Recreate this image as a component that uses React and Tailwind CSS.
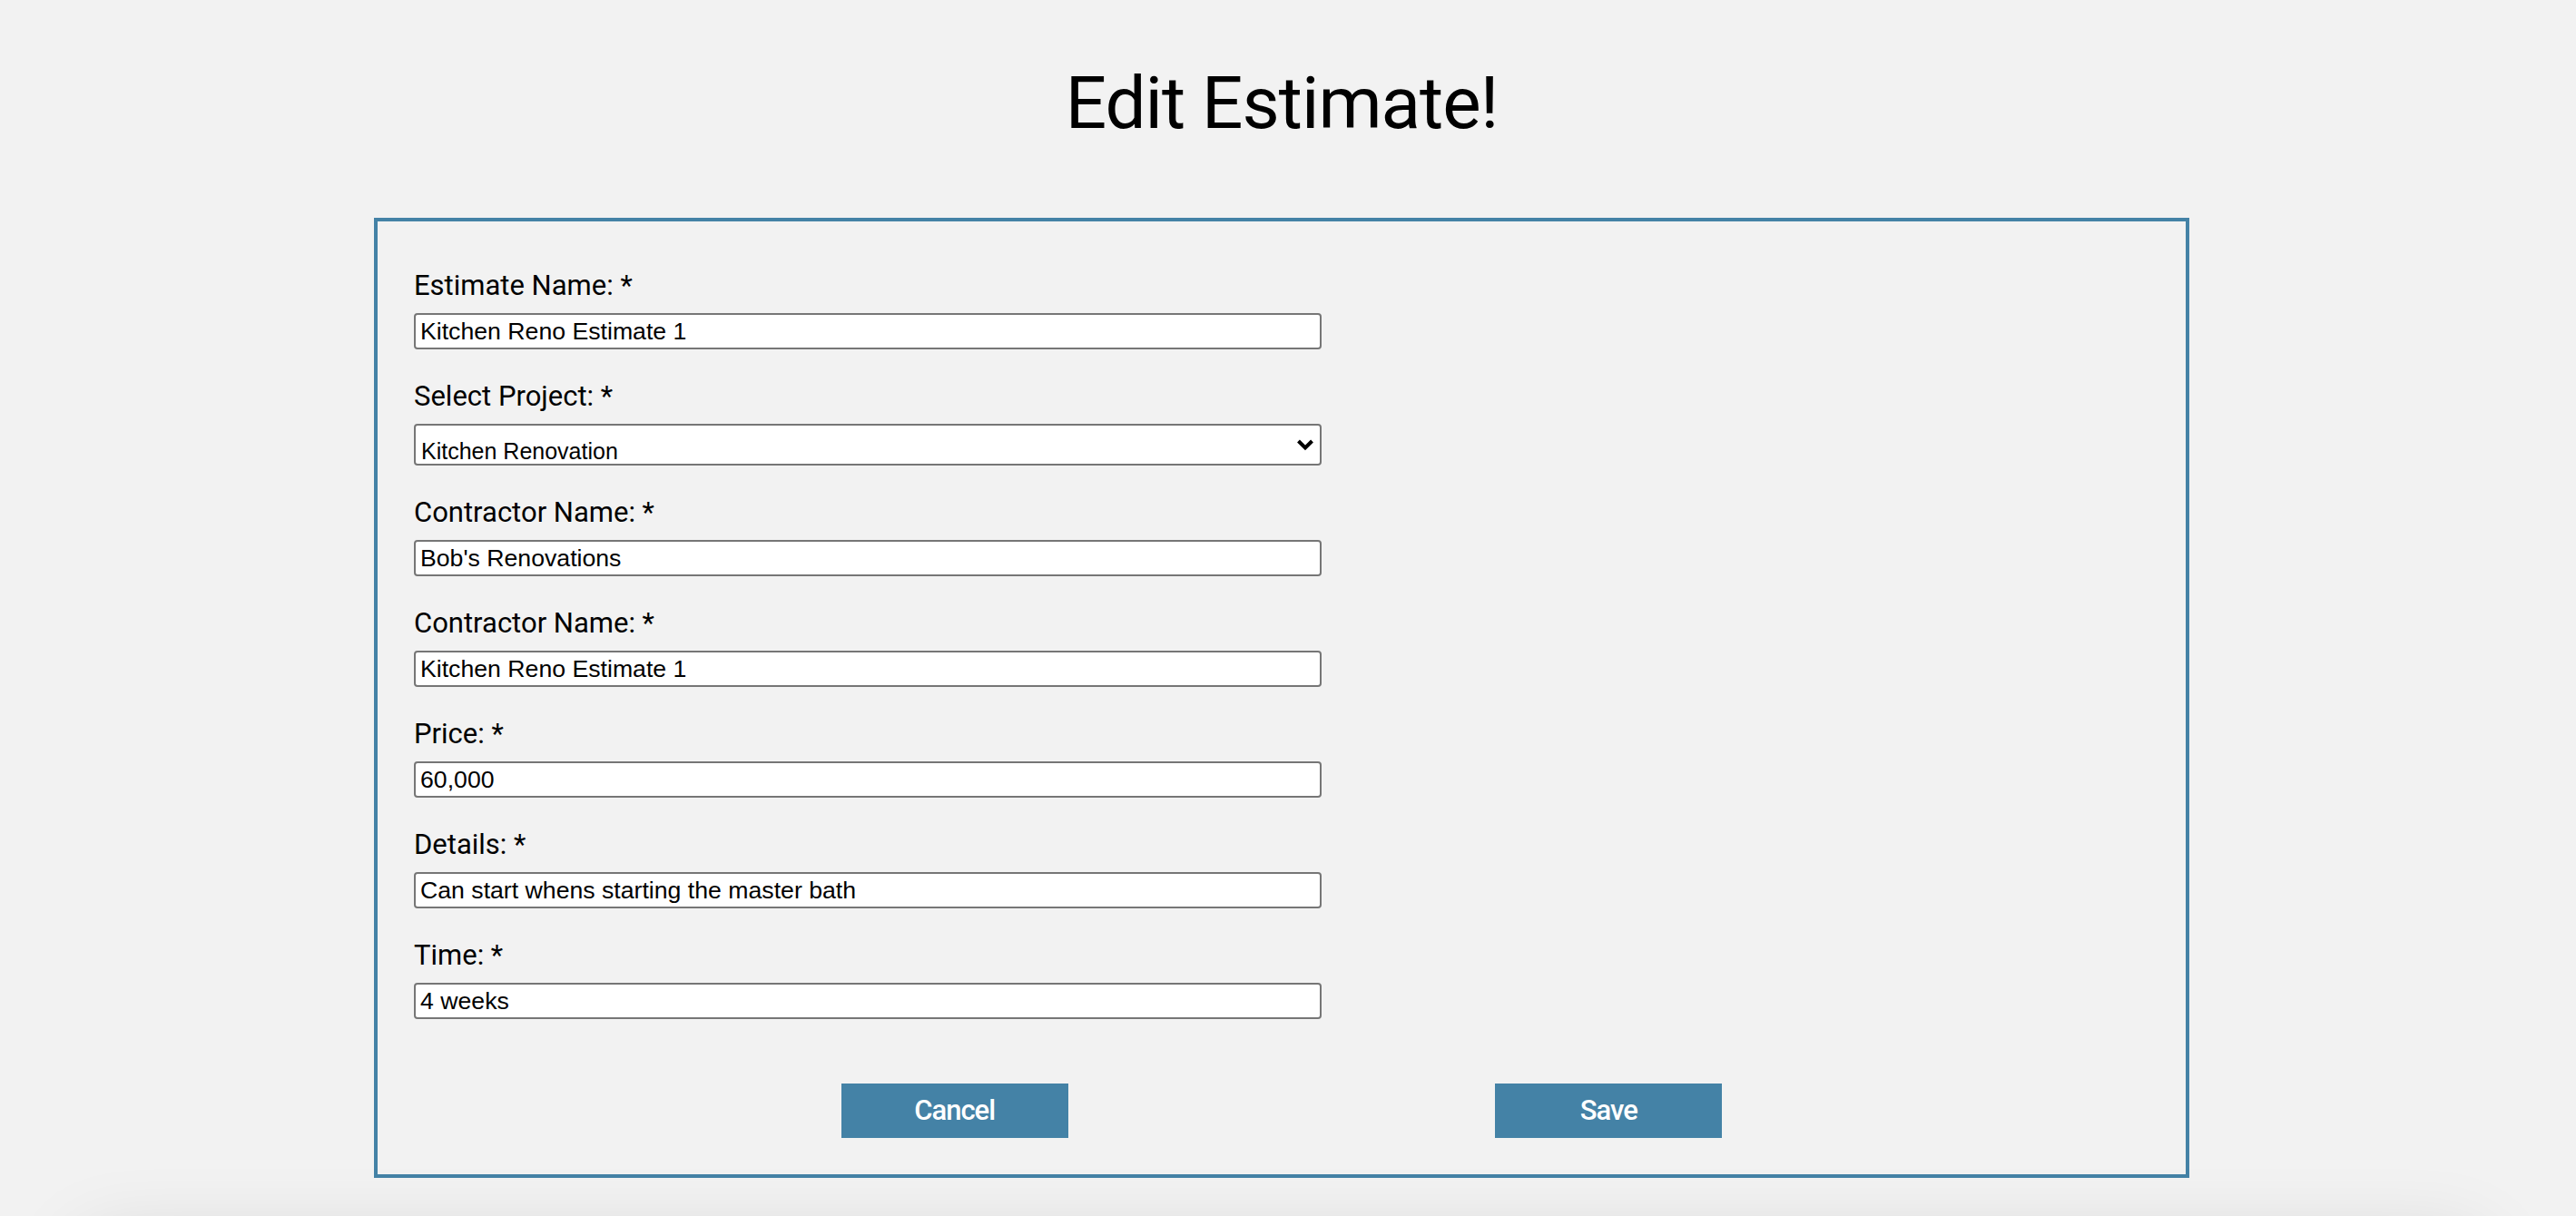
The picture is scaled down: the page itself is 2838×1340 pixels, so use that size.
import React from "react";

const fields = [
  { label: "Estimate Name: *", value: "Kitchen Reno Estimate 1" },
  { label: "Select Project: *", select: true, value: "Kitchen Renovation" },
  { label: "Contractor Name: *", value: "Bob's Renovations" },
  { label: "Contractor Name: *", value: "Kitchen Reno Estimate 1" },
  { label: "Price: *", value: "60,000" },
  { label: "Details: *", value: "Can start whens starting the master bath" },
  { label: "Time: *", value: "4 weeks" },
];

const head = { fontFamily: "Roboto, 'Liberation Sans', sans-serif" };
const body = { fontFamily: "'Liberation Sans', Arial, sans-serif" };

function Field({ f }) {
  return (
    <div className="flex flex-col">
      <label
        className="block text-[31px] leading-[36px] text-black"
        style={head}
      >
        {f.label}
      </label>
      {f.select ? (
        <div className="relative mt-[12px] w-[1000px] h-[46px]">
          <select
            defaultValue={f.value}
            className="appearance-none w-full h-full bg-white border-2 border-[#767676] rounded-[4px] pl-[6px] pt-[10px] text-[25px] text-black outline-none"
            style={body}
          >
            <option>Kitchen Renovation</option>
            <option>Master Bath</option>
          </select>
          <svg
            className="absolute right-[8px] top-[16px] pointer-events-none"
            width="20"
            height="14"
            viewBox="0 0 20 14"
          >
            <polyline
              points="2.5,3 10,10.5 17.5,3"
              fill="none"
              stroke="#000"
              strokeWidth="4"
            />
          </svg>
        </div>
      ) : (
        <input
          type="text"
          defaultValue={f.value}
          className="mt-[12px] w-[1000px] h-[40px] bg-white border-2 border-[#767676] rounded-[4px] px-[5px] text-[26.67px] text-black outline-none"
          style={body}
        />
      )}
    </div>
  );
}

export default function App() {
  return (
    <div className="h-[1340px] overflow-hidden bg-[#f2f2f2] flex flex-col items-center pr-[14px]">
      <h1
        className="mt-[70px] text-[80px] leading-[88px] text-black font-normal tracking-[-1px]"
        style={head}
      >
        Edit Estimate!
      </h1>
      <div className="mt-[82px] w-[2000px] shrink-0 border-4 border-[#4482a6] pt-[53px] px-[40px] pb-[40px]">
        <div className="flex flex-col gap-[34px]">
          {fields.map((f, i) => (
            <Field key={i} f={f} />
          ))}
        </div>
        <div className="mt-[71px] flex justify-evenly">
          <button
            className="w-[250px] h-[60px] bg-[#4482a6] text-white text-[31px] font-medium tracking-[-1px]"
            style={head}
          >
            Cancel
          </button>
          <button
            className="w-[250px] h-[60px] bg-[#4482a6] text-white text-[31px] font-medium tracking-[-1px]"
            style={head}
          >
            Save
          </button>
        </div>
      </div>
      <div className="mt-[72px] w-[2640px] h-[200px] shrink-0 bg-[#f2f2f2] shadow-[0_0_90px_rgba(0,0,0,0.14)]" />
    </div>
  );
}
